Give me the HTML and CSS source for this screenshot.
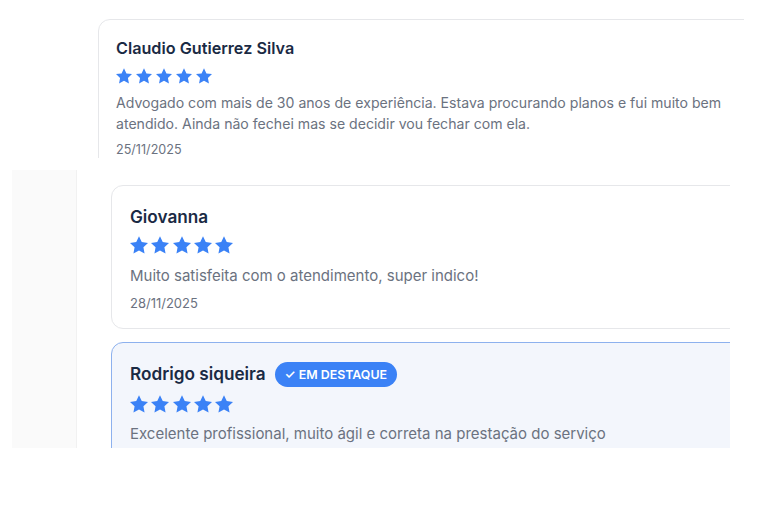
FILE: index.html
```html
<!DOCTYPE html>
<html lang="pt-BR">
<head>
<meta charset="utf-8">
<link rel="stylesheet" href="styles.css">
</head>
<body>
<svg width="0" height="0" class="defs">
  <defs>
    <symbol id="star" viewBox="1.8 1.4 20.4 20.4">
      <path d="M12 1.8l3.1 6.5 7.1.9-5.2 4.9 1.3 7.1L12 17.8l-6.3 3.4 1.3-7.1-5.2-4.9 7.1-.9z"/>
    </symbol>
  </defs>
</svg>

<section class="shot shot-top">
  <article class="card">
    <h3 class="name">Claudio Gutierrez Silva</h3>
    <div class="stars">
      <svg><use href="#star"/></svg><svg><use href="#star"/></svg><svg><use href="#star"/></svg><svg><use href="#star"/></svg><svg><use href="#star"/></svg>
    </div>
    <p class="text">Advogado com mais de 30 anos de experiência. Estava procurando planos e fui muito bem atendido. Ainda não fechei mas se decidir vou fechar com ela.</p>
    <p class="date">25/11/2025</p>
  </article>
</section>

<section class="shot shot-bottom">
  <aside class="side"></aside>
  <div class="list">
    <article class="card card-lg">
      <h3 class="name">Giovanna</h3>
      <div class="stars">
        <svg><use href="#star"/></svg><svg><use href="#star"/></svg><svg><use href="#star"/></svg><svg><use href="#star"/></svg><svg><use href="#star"/></svg>
      </div>
      <p class="text">Muito satisfeita com o atendimento, super indico!</p>
      <p class="date">28/11/2025</p>
    </article>
    <article class="card card-lg card-featured">
      <div class="head">
        <h3 class="name">Rodrigo siqueira</h3>
        <span class="badge">✓ EM DESTAQUE</span>
      </div>
      <div class="stars">
        <svg><use href="#star"/></svg><svg><use href="#star"/></svg><svg><use href="#star"/></svg><svg><use href="#star"/></svg><svg><use href="#star"/></svg>
      </div>
      <p class="text">Excelente profissional, muito ágil e correta na prestação do serviço</p>
    </article>
  </div>
</section>
</body>
</html>
```

FILE: styles.css
```css
* { box-sizing: border-box; }
html, body { margin: 0; padding: 0; background: #ffffff; }
body {
  font-family: Inter, "Noto Sans", "Liberation Sans", sans-serif;
  width: 768px;
  height: 512px;
  overflow: hidden;
}
.defs { position: absolute; width: 0; height: 0; }

.shot { overflow: hidden; }

.shot-top {
  margin: 19px 0 0 98px;
  width: 646px;
  height: 139px;
}

.card {
  background: #fff;
  border: 1px solid #e6e7ea;
  border-radius: 12px;
  padding: 16px 17px;
  width: 680px;
}

.name {
  margin: 0;
  font-size: 16.2px;
  font-weight: 600;
  color: #1a2a44;
  line-height: 24px;
}

.stars {
  display: flex;
  gap: 4px;
  margin-top: 8px;
  height: 16px;
}
.stars svg {
  width: 16px;
  height: 16px;
  fill: #3b82f6;
}

.text {
  margin: 8px 0 0;
  font-size: 14.1px;
  line-height: 21px;
  color: #6b7280;
}
.date {
  margin: 7px 0 0;
  font-size: 12.6px;
  line-height: 18px;
  color: #6b7280;
}

.shot-bottom {
  margin: 12px 0 0 12px;
  width: 718px;
  height: 278px;
  display: flex;
}
.side {
  width: 65px;
  flex: none;
  background: #fafafa;
  border-right: 1px solid #f1f1f1;
}
.list {
  flex: 1;
  padding: 15px 0 0 34px;
  display: flex;
  flex-direction: column;
  gap: 13px;
}
.card-lg {
  padding: 18px 18px 18px;
  width: 700px;
  height: 144px;
}
.card-lg .name { font-size: 17.2px; line-height: 26px; }
.card-lg .stars { margin-top: 6px; height: 18px; gap: 3.25px; }
.card-lg .stars svg { width: 18px; height: 18px; }
.card-lg .text { font-size: 15px; line-height: 22px; margin-top: 11px; }
.card-lg .date { font-size: 13px; line-height: 20px; margin-top: 6px; }

.card-featured {
  background: #f3f6fc;
  border: 1.5px solid #8db1ee;
  height: 200px;
}
.card-featured .stars { margin-top: 8px; }
.card-featured .text { margin-top: 10px; }
.head {
  display: flex;
  align-items: center;
  gap: 9px;
}
.badge {
  display: inline-flex;
  align-items: center;
  height: 25px;
  padding: 0 10px;
  border-radius: 13px;
  background: #3b82f6;
  color: #fff;
  font-size: 12.4px;
  font-weight: 600;
  font-family: Inter, "DejaVu Sans", sans-serif;
}
```
